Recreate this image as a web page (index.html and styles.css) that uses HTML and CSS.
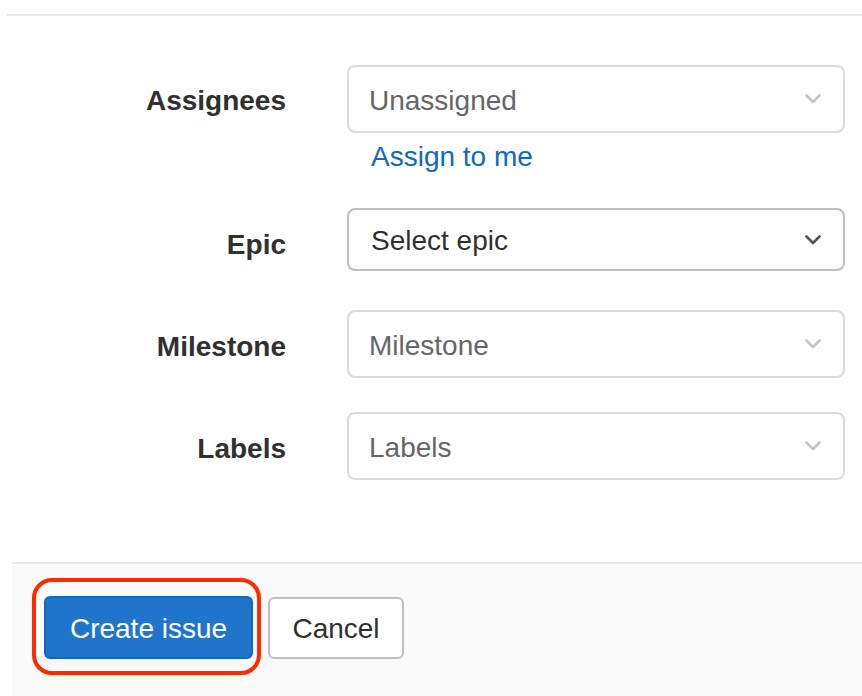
FILE: index.html
```html
<!DOCTYPE html>
<html>
<head>
<meta charset="utf-8">
<link rel="stylesheet" href="styles.css">
</head>
<body>
<div class="divider"></div>
<form class="form">
  <div class="row row-assignees">
    <label class="label">Assignees</label>
    <div class="field">
      <div class="select select-light">
        <span class="placeholder">Unassigned</span>
        <svg class="chev" width="16" height="10" viewBox="0 0 16 10"><path d="M1.5 1.5 L8 8 L14.5 1.5" fill="none" stroke="currentColor" stroke-width="2.6" stroke-linecap="round" stroke-linejoin="round"/></svg>
      </div>
      <a class="assign-link">Assign to me</a>
    </div>
  </div>
  <div class="row row-epic">
    <label class="label">Epic</label>
    <div class="field">
      <div class="select select-dark">
        <span class="value">Select epic</span>
        <svg class="chev" width="16" height="10" viewBox="0 0 16 10"><path d="M1.5 1.5 L8 8 L14.5 1.5" fill="none" stroke="currentColor" stroke-width="2.6" stroke-linecap="round" stroke-linejoin="round"/></svg>
      </div>
    </div>
  </div>
  <div class="row row-milestone">
    <label class="label">Milestone</label>
    <div class="field">
      <div class="select select-light">
        <span class="placeholder">Milestone</span>
        <svg class="chev" width="16" height="10" viewBox="0 0 16 10"><path d="M1.5 1.5 L8 8 L14.5 1.5" fill="none" stroke="currentColor" stroke-width="2.6" stroke-linecap="round" stroke-linejoin="round"/></svg>
      </div>
    </div>
  </div>
  <div class="row row-labels">
    <label class="label">Labels</label>
    <div class="field">
      <div class="select select-light">
        <span class="placeholder">Labels</span>
        <svg class="chev" width="16" height="10" viewBox="0 0 16 10"><path d="M1.5 1.5 L8 8 L14.5 1.5" fill="none" stroke="currentColor" stroke-width="2.6" stroke-linecap="round" stroke-linejoin="round"/></svg>
      </div>
    </div>
  </div>
</form>
<div class="footer">
  <div class="btn-wrap">
    <button class="btn btn-primary" type="button">Create issue</button>
    <span class="highlight"></span>
  </div>
  <button class="btn btn-default" type="button">Cancel</button>
</div>
</body>
</html>
```

FILE: styles.css
```css
html, body {
  margin: 0;
  padding: 0;
  background: #fff;
  font-family: "Liberation Sans", Arial, sans-serif;
  color: #303030;
  width: 862px;
  height: 696px;
  overflow: hidden;
}

.divider {
  margin: 14px 0 0 7px;
  height: 2px;
  background: #e8e8e8;
}

.form {
  margin: 0;
  padding-top: 49px;
  height: 546px;
  box-sizing: border-box;
}

.row {
  display: grid;
  grid-template-columns: 347px 498px;
  align-items: start;
}

.label {
  font-size: 28px;
  font-weight: bold;
  text-align: right;
  padding-right: 61px;
  color: #303030;
}

.row-assignees .label { padding-top: 20px; }
.row-epic { margin-top: 34px; }
.row-epic .label { padding-top: 21px; }
.row-milestone { margin-top: 39px; }
.row-milestone .label { padding-top: 21px; }
.row-labels { margin-top: 34px; }
.row-labels .label { padding-top: 21px; }

.select {
  box-sizing: border-box;
  height: 68px;
  border: 2px solid #dbdbdb;
  border-radius: 8px;
  display: flex;
  align-items: center;
  justify-content: space-between;
  padding: 3px 22px 0 20px;
  font-size: 28px;
  background: #fff;
}

.select .chev { margin-top: -3px; }

.select-dark {
  height: 63px;
  border-color: #bfbfbf;
  padding-left: 22px;
}

.placeholder { color: #666; }
.value { color: #303030; }

.chev { display: block; color: #c4c4c4; }
.select-dark .chev { color: #555; }

.assign-link {
  display: block;
  margin: 7px 0 0 24px;
  font-size: 28px;
  line-height: 34px;
  color: #1068bf;
}

.footer {
  margin-left: 12px;
  height: 134px;
  box-sizing: border-box;
  background: #fafafa;
  border-top: 2px solid #e8e8e8;
  display: flex;
  align-items: flex-start;
  padding: 32px 0 0 32px;
  gap: 15px;
}

.btn-wrap {
  position: relative;
}

.btn {
  font-family: "Liberation Sans", Arial, sans-serif;
  font-size: 28px;
  border-radius: 6px;
  box-sizing: border-box;
  height: 63px;
  margin: 0;
  padding-top: 3px;
  cursor: pointer;
}

.btn-primary {
  width: 209px;
  background: #1f75cb;
  border: 2px solid #1068bf;
  color: #fff;
  display: block;
}

.btn-default {
  width: 136px;
  margin-top: 1px;
  height: 62px;
  background: #fff;
  border: 2px solid #bfbfbf;
  color: #303030;
}

.highlight {
  position: absolute;
  left: -12px;
  top: -18px;
  right: -8px;
  bottom: -16px;
  border: 4px solid #ff2a00;
  border-radius: 20px;
  pointer-events: none;
}
```
